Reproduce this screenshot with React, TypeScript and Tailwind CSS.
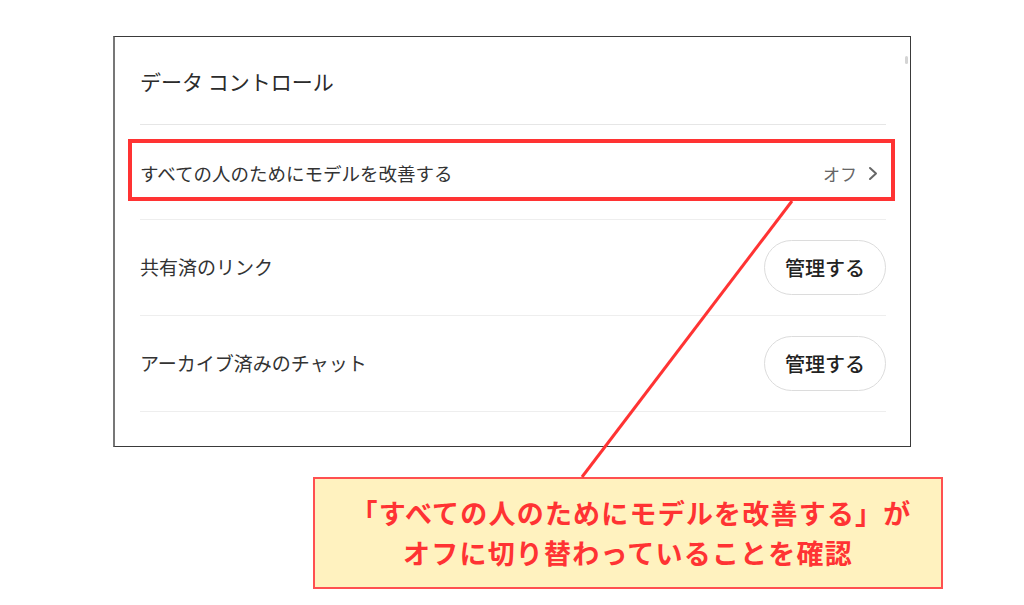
import React from "react";

const jp = { fontFamily: '"Noto Sans CJK JP", "Noto Sans", sans-serif' };

function ManageButton() {
  return (
    <button className="flex h-[55px] w-[122px] items-center justify-center rounded-full border border-[#dcdcdc] bg-white text-[20px] font-medium text-[#222]">
      管理する
    </button>
  );
}

export default function App() {
  return (
    <div className="relative h-[605px] w-[1024px] overflow-hidden bg-white" style={jp}>
      {/* screenshot frame */}
      <div className="relative ml-[113px] mt-[36px] h-[411px] w-[798px] border border-[#3a3a3a] border-l-[#777] border-l-2 bg-white pl-[25px] pr-[24px]">
        <div className="absolute right-[2px] top-[19px] h-[8px] w-[3px] rounded-sm bg-[#d4d4d4]" />
        <div className="flex h-[88px] items-center border-b border-[#e6e6e6] pt-[3px] text-[21px] text-[#2b2b2b]">
          データ コントロール
        </div>
        <div className="relative flex h-[95px] items-center justify-between border-b border-[#eeeeee]">
          <div className="pt-[3px] text-[18.5px] text-[#333]">すべての人のためにモデルを改善する</div>
          <div className="flex items-center gap-[11px] pr-[8px] pt-[3px] text-[17px] text-[#666]">
            <span>オフ</span>
            <svg width="10" height="15" viewBox="0 0 10 15" fill="none">
              <path d="M2 2 L8 7.5 L2 13" stroke="#666" strokeWidth="2" strokeLinecap="round" strokeLinejoin="round" />
            </svg>
          </div>
          <div className="pointer-events-none absolute left-[-12px] right-[-9px] top-[14px] h-[62px] border-[4px] border-[#ff3333]" />
        </div>
        <div className="flex h-[96px] items-center justify-between border-b border-[#eeeeee]">
          <div className="text-[19px] text-[#333]">共有済のリンク</div>
          <ManageButton />
        </div>
        <div className="flex h-[96px] items-center justify-between border-b border-[#eeeeee]">
          <div className="text-[19px] text-[#333]">アーカイブ済みのチャット</div>
          <ManageButton />
        </div>
      </div>

      {/* callout */}
      <div className="ml-[313px] mt-[30px] flex h-[112px] w-[630px] flex-col items-center justify-center border-2 border-[#ff5050] bg-[#fff2bf] text-[27px] font-bold leading-[40px] tracking-[1.2px] text-[#ff3333]">
        <div className="pl-[6px]">「すべての人のためにモデルを改善する」が</div>
        <div>オフに切り替わっていることを確認</div>
      </div>

      <svg className="pointer-events-none absolute left-0 top-0" width="1024" height="605">
        <line x1="792" y1="201" x2="582" y2="477" stroke="#ff3333" strokeWidth="3" />
      </svg>
    </div>
  );
}
